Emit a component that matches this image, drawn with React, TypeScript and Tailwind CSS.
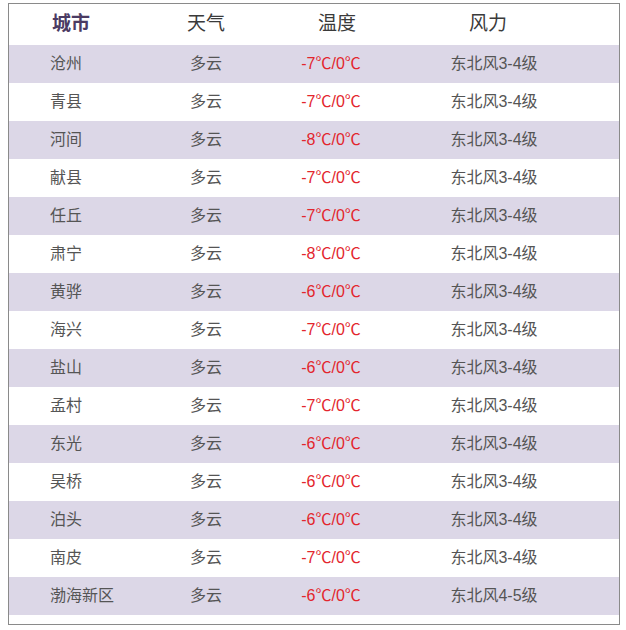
const rows = [
  ["沧州", "多云", "-7℃/0℃", "东北风3-4级"],
  ["青县", "多云", "-7℃/0℃", "东北风3-4级"],
  ["河间", "多云", "-8℃/0℃", "东北风3-4级"],
  ["献县", "多云", "-7℃/0℃", "东北风3-4级"],
  ["任丘", "多云", "-7℃/0℃", "东北风3-4级"],
  ["肃宁", "多云", "-8℃/0℃", "东北风3-4级"],
  ["黄骅", "多云", "-6℃/0℃", "东北风3-4级"],
  ["海兴", "多云", "-7℃/0℃", "东北风3-4级"],
  ["盐山", "多云", "-6℃/0℃", "东北风3-4级"],
  ["孟村", "多云", "-7℃/0℃", "东北风3-4级"],
  ["东光", "多云", "-6℃/0℃", "东北风3-4级"],
  ["吴桥", "多云", "-6℃/0℃", "东北风3-4级"],
  ["泊头", "多云", "-6℃/0℃", "东北风3-4级"],
  ["南皮", "多云", "-7℃/0℃", "东北风3-4级"],
  ["渤海新区", "多云", "-6℃/0℃", "东北风4-5级"],
];

const App = () => {
  return (
    <div
      className="w-[626px] h-[630px] bg-white pt-[3px] pl-[8px]"
      style={{ fontFamily: '"Liberation Sans", "Noto Sans CJK SC", sans-serif' }}
    >
      <div className="w-[612px] h-[622px] border border-[#8a8a8a] bg-white">
        {/* header */}
        <div className="grid grid-cols-[131px_132px_122px_196px_1fr] h-[41px] items-center text-[19px]">
          <div className="pl-[43px] font-bold text-[#4b3b63]">城市</div>
          <div className="text-center text-[#3a3a3a]">天气</div>
          <div className="text-center pl-2 text-[#3a3a3a]">温度</div>
          <div className="text-center pr-2 text-[#3a3a3a]">风力</div>
          <div />
        </div>

        {rows.map((r, i) => (
          <div
            key={r[0]}
            className={
              "grid grid-cols-[131px_132px_122px_196px_1fr] h-[38px] items-center text-[16px] " +
              (i % 2 === 0 ? "bg-[#dcd7e7]" : "bg-white")
            }
          >
            <div className="pl-[41px] text-[#555555]">{r[0]}</div>
            <div className="text-center text-[#555555]">{r[1]}</div>
            <div className="text-center pr-1 text-[#e3262d]">{r[2]}</div>
            <div className="text-center pl-1 text-[#555555]">{r[3]}</div>
            <div />
          </div>
        ))}
      </div>
    </div>
  );
};

export default App;
